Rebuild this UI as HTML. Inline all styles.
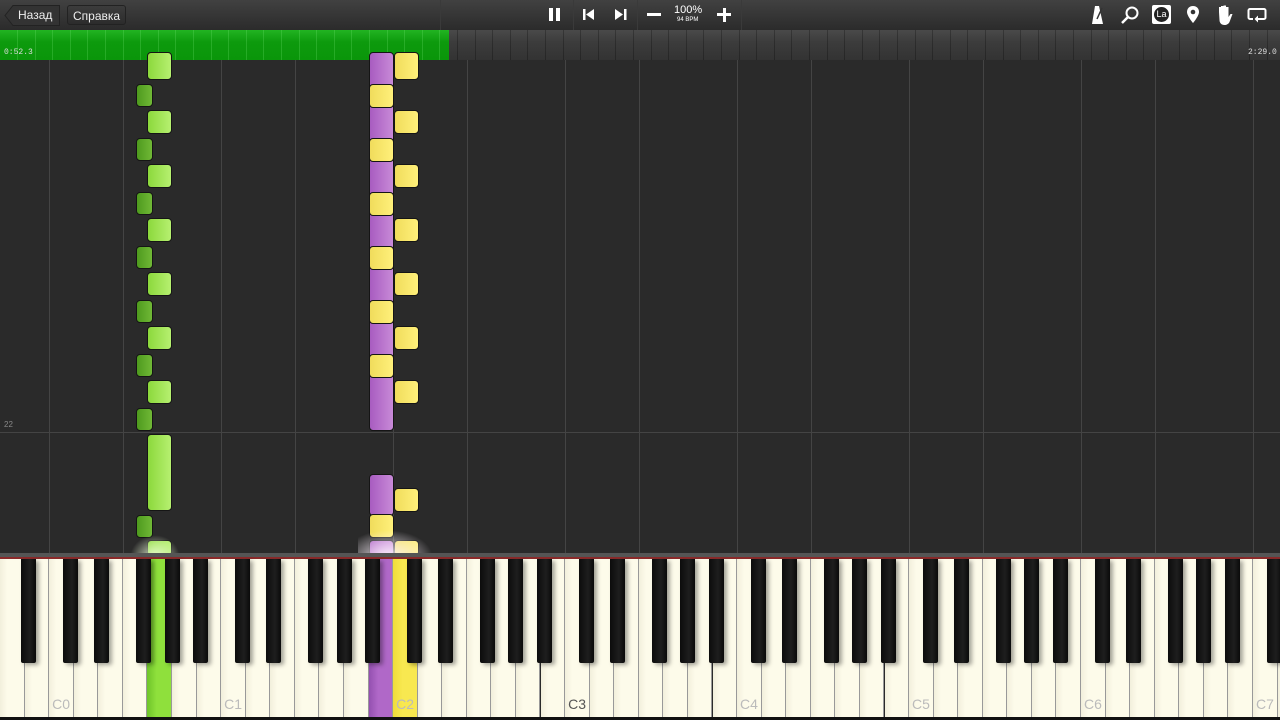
<!DOCTYPE html>
<html><head><meta charset="utf-8">
<style>
*{margin:0;padding:0;box-sizing:border-box}
body{width:1280px;height:720px;overflow:hidden;background:#2a2a2a;font-family:"Liberation Sans",sans-serif;position:relative}
.top{position:absolute;left:0;top:0;width:1280px;height:30px;background:linear-gradient(#414141,#2b2b2b);color:#fff}
.btn{position:absolute;top:5px;height:20px;font-size:12px;line-height:20px;padding:0 5px;background:linear-gradient(#3c3c3c,#2c2c2c);border:1px solid #222;border-radius:3px;color:#eee}
.sep{position:absolute;top:0;width:1px;height:30px;background:#222;border-right:1px solid #3a3a3a}
.prog{position:absolute;left:0;top:30px;width:1280px;height:30px;background:linear-gradient(#4a4a4a 0,#3c3c3c 40%,#333 100%)}
.green{position:absolute;left:0;top:30px;width:449px;height:30px;background:linear-gradient(#22b422,#0d9a0d 40%,#0a960a)}
.tick{position:absolute;top:30px;width:1px;height:30px}
.t{position:absolute;font-family:"Liberation Mono",monospace;font-size:8px;color:#ddd}
.vl{position:absolute;top:60px;width:1px;height:495px;background:#444}
.n{position:absolute;border-radius:4px;border:1px solid #151515}
.lg{background:linear-gradient(90deg,#8cd83c,#b6f070);}
.dg{background:linear-gradient(90deg,#4e9a1e,#70b836);}
.pu{background:linear-gradient(90deg,#a85cc0,#c88ad8);}
.ye{background:linear-gradient(90deg,#f0dc5c,#fff07a);}
.wk{position:absolute;top:559px;height:158px;background:linear-gradient(90deg,#f2efdc,#fdfbea 30%,#fdfbea);border-right:1px solid #999}
.bk{position:absolute;top:559px;width:15px;height:104px;background:linear-gradient(90deg,#0c0c0c,#1e1e1e 60%,#0a0a0a);border-radius:0 0 2px 2px;box-shadow:3px 2px 4px rgba(0,0,0,.35)}
.lbl{position:absolute;top:696px;font-size:14px;color:#bbb}
</style></head><body>
<div class="top">
 <svg style="position:absolute;left:4px;top:5px" width="56" height="21"><path d="M9 0.5H55.5V20.5H9L1 10.5Z" fill="#333" stroke="#222"/></svg>
 <div style="position:absolute;left:18px;top:5px;font-size:12px;line-height:20px;color:#eee">Назад</div>
 <div class="btn" style="left:67px">Справка</div>
 <div class="sep" style="left:440px"></div>
 <div style="position:absolute;left:549px;top:8px;width:4px;height:13px;background:#fff"></div>
 <div style="position:absolute;left:556px;top:8px;width:4px;height:13px;background:#fff"></div>
 <div class="sep" style="left:573px"></div>
 <svg style="position:absolute;left:583px;top:9px" width="14" height="12"><rect x="0" y="0" width="2.5" height="11" fill="#fff"/><path d="M11 0L3 5.5 11 11Z" fill="#fff"/></svg>
 <svg style="position:absolute;left:614px;top:9px" width="14" height="12"><rect x="10" y="0" width="2.5" height="11" fill="#fff"/><path d="M1 0L9 5.5 1 11Z" fill="#fff"/></svg>
 <div class="sep" style="left:637px"></div>
 <div style="position:absolute;left:647px;top:13px;width:14px;height:3px;background:#fff"></div>
 <div style="position:absolute;left:674px;top:4px;font-size:11px;color:#fff">100%</div>
 <div style="position:absolute;left:677px;top:17px;font-size:6px;color:#fff">94 BPM</div>
 <div style="position:absolute;left:717px;top:13px;width:14px;height:3px;background:#fff"></div>
 <div style="position:absolute;left:722.5px;top:8px;width:3px;height:14px;background:#fff"></div>
 <div class="sep" style="left:741px"></div>
 <svg style="position:absolute;left:1090px;top:5px" width="16" height="20"><path d="M5 1H9L13 19H2Z" fill="#fff"/><path d="M7 14L12 3" stroke="#333" stroke-width="1.5"/></svg>
 <svg style="position:absolute;left:1120px;top:5px" width="20" height="20"><circle cx="12" cy="8" r="5.5" fill="none" stroke="#fff" stroke-width="2"/><path d="M8 12L2 18" stroke="#fff" stroke-width="2.5"/></svg>
 <div style="position:absolute;left:1152px;top:5px;width:19px;height:19px;background:#fff;border-radius:2px"><div style="position:absolute;left:2px;top:2px;width:15px;height:15px;border-radius:50%;background:#222;color:#fff;font-size:9px;line-height:15px;text-align:center">La</div></div>
 <svg style="position:absolute;left:1186px;top:5px" width="14" height="20"><path d="M7 1C3 1 1 4 1 7C1 11 7 18 7 18C7 18 13 11 13 7C13 4 11 1 7 1Z" fill="#fff"/><circle cx="7" cy="7" r="2.3" fill="#333"/></svg>
 <svg style="position:absolute;left:1216px;top:4px" width="18" height="22"><path d="M3 8V3h2v7V2h2.5v8V1.5H10V10V3h2.5v10l2-3h2l-3 8c-1 2-3 3-5 3c-3 0-5-2-5-5Z" fill="#fff"/></svg>
 <svg style="position:absolute;left:1247px;top:7px" width="20" height="16"><path d="M6 12H3a1.5 1.5 0 0 1-1.5-1.5v-7A1.5 1.5 0 0 1 3 2h14a1.5 1.5 0 0 1 1.5 1.5v7A1.5 1.5 0 0 1 17 12h-7" fill="none" stroke="#fff" stroke-width="2"/><path d="M11 8.5L7.5 12 11 15.5Z" fill="#fff"/></svg>
</div>
<div class="prog"></div>
<div class="green"></div>
<div id="ticks"></div>
<div class="t" style="left:4px;top:48px">0:52.3</div>
<div class="t" style="left:1248px;top:48px">2:29.0</div>
<div id="grid"></div>
<div style="position:absolute;left:0;top:432px;width:1280px;height:1px;background:#444"></div>
<div style="position:absolute;left:4px;top:420px;font-size:8px;color:#888">22</div>
<div id="notes"></div>
<div style="position:absolute;left:0;top:553px;width:1280px;height:5px;background:#555"></div>
<div style="position:absolute;left:0;top:557px;width:1280px;height:2px;background:#8a2a2a"></div>
<div style="position:absolute;left:0;top:717px;width:1280px;height:3px;background:#111"></div>
<div id="kb"></div>
<script>
var W=1280/52.1;
var h='';
for(var x=17;x<1280;x+=17.6){h+='<div class="tick" style="left:'+Math.round(x)+'px;background:'+(x<449?'rgba(120,230,120,.25)':'rgba(0,0,0,.25)')+'"></div>';}
document.getElementById('ticks').innerHTML=h;
h='';
for(var i=0;i<53;i++){var name=['A','B','C','D','E','F','G'][i%7];if(name=='C'||name=='F'){h+='<div class="vl" style="left:'+Math.round(i*W)+'px"></div>';}}
document.getElementById('grid').innerHTML=h;
h='';
function n(c,x,y1,y2,w){h+='<div class="n '+c+'" style="left:'+x+'px;top:'+y1+'px;width:'+w+'px;height:'+(y2-y1)+'px"></div>';}
n('pu',369,52,431,25);n('pu',369,474,516,25);n('pu',369,540,556,25);
var lgs=[[52,80],[110,134],[164,188],[218,242],[272,296],[326,350],[380,404],[434,511],[540,556]];
lgs.forEach(function(a){n('lg',147,a[0],a[1],25)});
var dgs=[[84,107],[138,161],[192,215],[246,269],[300,323],[354,377],[408,431],[515,538]];
dgs.forEach(function(a){n('dg',136,a[0],a[1],17)});
var yl=[[84,108],[138,162],[192,216],[246,270],[300,324],[354,378],[514,538]];
yl.forEach(function(a){n('ye',369,a[0],a[1],25)});
var yr=[[52,80],[110,134],[164,188],[218,242],[272,296],[326,350],[380,404],[488,512],[540,556]];
yr.forEach(function(a){n('ye',394,a[0],a[1],25)});
h+='<div style="position:absolute;left:130px;top:535px;width:50px;height:22px;background:radial-gradient(ellipse at 50% 100%,rgba(240,255,220,.9),rgba(200,255,150,0) 70%)"></div>';
h+='<div style="position:absolute;left:358px;top:530px;width:75px;height:27px;background:radial-gradient(ellipse at 40% 100%,rgba(255,245,255,.95),rgba(255,240,200,0) 70%)"></div>';
document.getElementById('notes').innerHTML=h;
h='';
var names=['A','B','C','D','E','F','G'];
for(var i=0;i<53;i++){var x=i*W;var bg='';
 if(i==6)bg='background:linear-gradient(90deg,#6ec42a,#8fe03c 40%,#8fe03c);';
 if(i==15)bg='background:linear-gradient(90deg,#9450b0,#b068c8 40%,#b068c8);';
 if(i==16)bg='background:linear-gradient(90deg,#f0dc3a,#f8e850 40%,#f8e850);';
 h+='<div class="wk" style="left:'+x.toFixed(1)+'px;width:'+(W).toFixed(1)+'px;'+bg+'"></div>';
 if(names[i%7]=='C'){var oc=(i-2)/7;h+='<div class="lbl" style="left:'+(x+3).toFixed(1)+'px;'+(oc==3?'color:#555':'')+'">C'+oc+'</div>';}
}
var off={A:4,C:-3,D:3,F:-4,G:0};
for(var i=0;i<53;i++){var nm=names[i%7];if(nm in off){var c=(i+1)*W+off[nm];if(c<1290)h+='<div class="bk" style="left:'+(c-7.5).toFixed(1)+'px"></div>';}}
document.getElementById('kb').innerHTML=h;
</script>
</body></html>
